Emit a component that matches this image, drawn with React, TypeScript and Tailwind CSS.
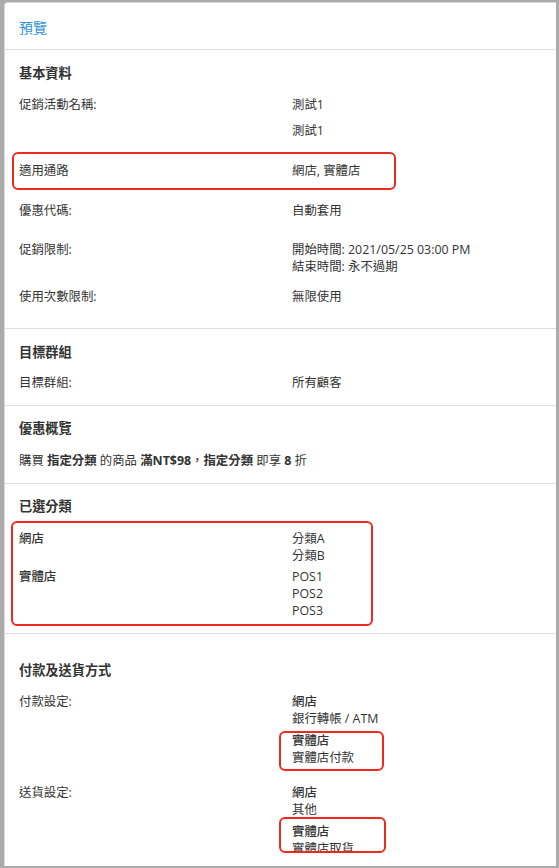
import React from "react";

const font = { fontFamily: '"Open Sans", "Noto Sans CJK TC", sans-serif' };

function Row({ label, children, className = "" }: { label: string; children: React.ReactNode; className?: string }) {
  return (
    <div className={`flex ${className}`}>
      <div className="w-[273px] shrink-0">{label}</div>
      <div className="flex-1">{children}</div>
    </div>
  );
}

function Box({ className }: { className: string }) {
  return <div className={`absolute border-[2.5px] border-[#ee2a1e] rounded-[6px] pointer-events-none ${className}`} />;
}

export default function App() {
  return (
    <div className="w-[559px] h-[868px] bg-[#ababab] pt-[2px] pl-[4px] pr-[3px] pb-[2px]" style={font}>
      <div className="relative h-[864px] bg-white border-l border-t border-[#dadada] rounded-tl-[4px] text-[#333] text-[12.4px] leading-[17px]">
        <div className="pt-[15px] pb-[11px] pl-[14px] border-b border-[#dedede]">
          <div className="text-[14px] leading-[20px] text-[#2f93d8]">預覽</div>
        </div>
        <div className="h-[801px] overflow-hidden">
          {/* 基本資料 */}
          <div className="pl-[14px] pt-[14px] pb-[23px] border-b border-[#dedede]">
            <div className="text-[13.2px] leading-[18px] font-bold">基本資料</div>
            <Row label="促銷活動名稱:" className="mt-[14px]">
              <div>測試1</div>
              <div className="mt-[9px]">測試1</div>
            </Row>
            <Row label="適用通路" className="mt-[23px]">
              <div>網店, 實體店</div>
            </Row>
            <Row label="優惠代碼:" className="mt-[23px]">
              <div>自動套用</div>
            </Row>
            <Row label="促銷限制:" className="mt-[22px]">
              <div>開始時間: 2021/05/25 03:00 PM</div>
              <div>結束時間: 永不過期</div>
            </Row>
            <Row label="使用次數限制:" className="mt-[13px]">
              <div>無限使用</div>
            </Row>
          </div>
          {/* 目標群組 */}
          <div className="pl-[14px] pt-[14px] pb-[14px] border-b border-[#dedede]">
            <div className="text-[13.2px] leading-[18px] font-bold">目標群組</div>
            <Row label="目標群組:" className="mt-[13px]">
              <div>所有顧客</div>
            </Row>
          </div>
          {/* 優惠概覽 */}
          <div className="pl-[14px] pt-[13px] pb-[14px] border-b border-[#dedede]">
            <div className="text-[13.2px] leading-[18px] font-bold">優惠概覽</div>
            <div className="mt-[15px]">
              購買 <span className="font-bold">指定分類</span> 的商品 <span className="font-bold">滿NT$98</span>，<span className="font-bold">指定分類</span> 即享 <span className="font-bold">8</span> 折
            </div>
          </div>
          {/* 已選分類 */}
          <div className="pl-[14px] pt-[13px] pb-[14px] border-b border-[#dedede]">
            <div className="text-[13.2px] leading-[18px] font-bold">已選分類</div>
            <div className="flex mt-[15px]">
              <div className="w-[273px] shrink-0 font-medium">網店</div>
              <div>
                <div>分類A</div>
                <div>分類B</div>
              </div>
            </div>
            <div className="flex mt-[4px]">
              <div className="w-[273px] shrink-0 font-medium">實體店</div>
              <div>
                <div>POS1</div>
                <div>POS2</div>
                <div>POS3</div>
              </div>
            </div>
          </div>
          {/* 付款及送貨方式 */}
          <div className="pl-[14px] pt-[27px]">
            <div className="text-[13.2px] leading-[18px] font-bold">付款及送貨方式</div>
            <Row label="付款設定:" className="mt-[14px]">
              <div className="font-medium">網店</div>
              <div>銀行轉帳 / ATM</div>
              <div className="font-medium mt-[5px]">實體店</div>
              <div>實體店付款</div>
            </Row>
            <Row label="送貨設定:" className="mt-[18px]">
              <div className="font-medium">網店</div>
              <div>其他</div>
              <div className="font-medium mt-[5px]">實體店</div>
              <div>實體店取貨</div>
            </Row>
          </div>
        </div>
        <Box className="left-[7px] top-[149px] w-[384px] h-[38px]" />
        <Box className="left-[6px] top-[518px] w-[362px] h-[105px]" />
        <Box className="left-[274px] top-[728px] w-[105px] h-[40px]" />
        <Box className="left-[274px] top-[814px] w-[107px] h-[36px]" />
      </div>
    </div>
  );
}
